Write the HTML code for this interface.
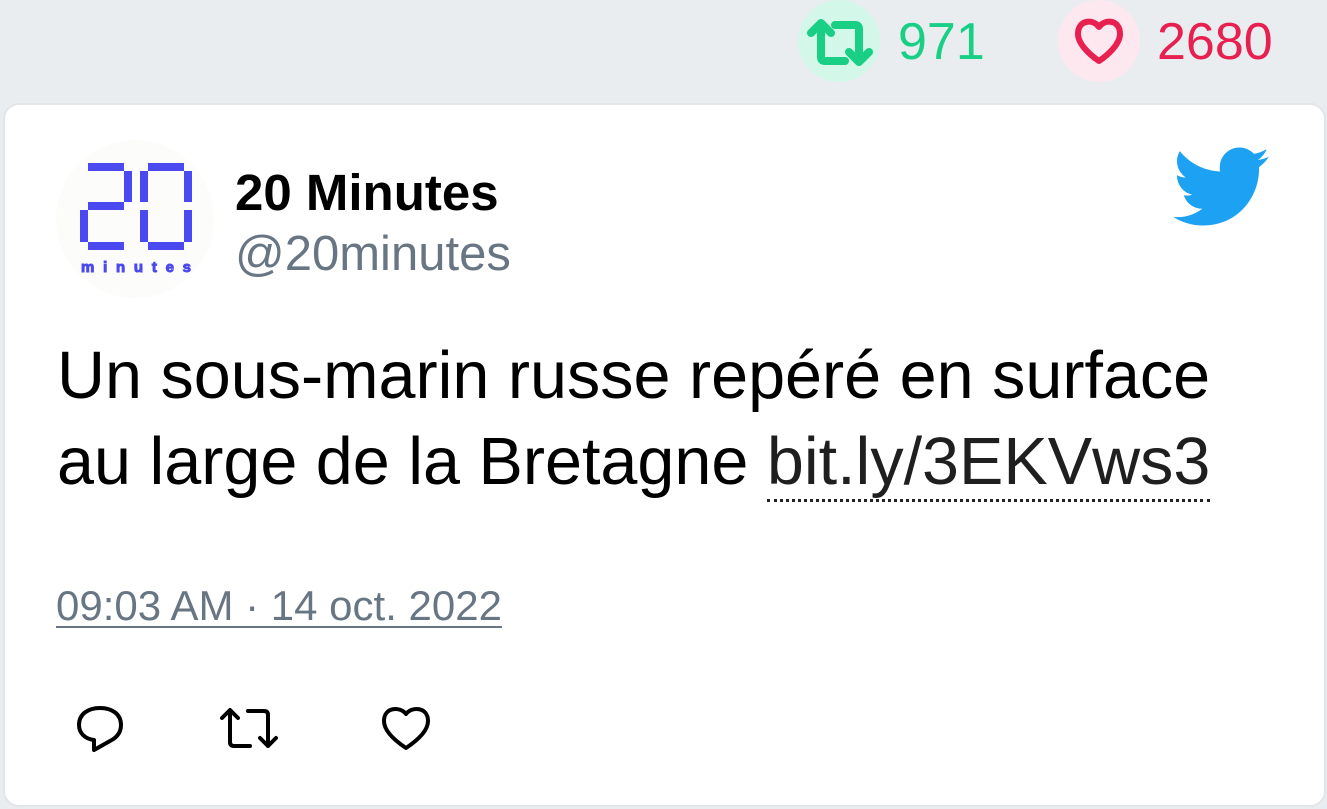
<!DOCTYPE html>
<html><head><meta charset="utf-8"><style>
html,body{margin:0;padding:0;width:1327px;height:809px;overflow:hidden;background:#e9edf0;font-family:"Liberation Sans",sans-serif;}
.card{position:absolute;left:3px;top:103px;width:1319px;height:700px;background:#fff;border:2px solid #e3e5e8;border-radius:16px;}
.abs{position:absolute;white-space:nowrap;}
</style></head><body>
<div class="abs" style="left:798px;top:0;width:82px;height:82px;border-radius:50%;background:#d3f7e8"></div>
<svg class="abs" style="left:807px;top:19px" width="66" height="48" viewBox="0 0 66 48" fill="none" stroke="#19cf86" stroke-width="8" stroke-linecap="round" stroke-linejoin="round">
<path d="M4 14 L14 4 L24 14 M14 6 V38 Q14 42 18 42 H38"/><path d="M28 6 H48 Q52 6 52 10 V42 M42 33 L52 43 L62 33"/></svg>
<div class="abs" style="left:898px;top:12px;font-size:52px;color:#19cf86">971</div>
<div class="abs" style="left:1058px;top:0;width:82px;height:82px;border-radius:50%;background:#fde8ef"></div>
<svg class="abs" style="left:1074px;top:17px" width="50" height="48" viewBox="0 0 50 48" fill="none" stroke="#e8204f" stroke-width="6" stroke-linejoin="round">
<path d="M25 10 C20 2 4 2 4 17 C4 27 16 38 25 44 C34 38 46 27 46 17 C46 2 30 2 25 10 Z"/></svg>
<div class="abs" style="left:1157px;top:12px;font-size:52px;color:#e8204f">2680</div>
<div class="card"></div>
<div class="abs" style="left:56px;top:140px;width:158px;height:158px;border-radius:50%;background:#fcfcfa"></div>
<svg class="abs" style="left:78px;top:162px" width="116" height="118" viewBox="0 0 116 118" fill="#4a4af0">
<rect x="10" y="1" width="36" height="8"/><rect x="46" y="9" width="8" height="31"/><rect x="10" y="40" width="36" height="8"/><rect x="2" y="48" width="8" height="32"/><rect x="10" y="80" width="36" height="8"/>
<rect x="70" y="1" width="36" height="8"/><rect x="106" y="9" width="8" height="31"/><rect x="106" y="48" width="8" height="32"/><rect x="70" y="80" width="36" height="8"/><rect x="62" y="48" width="8" height="32"/><rect x="62" y="9" width="8" height="31"/>
<text x="58" y="110" font-family="Liberation Sans,sans-serif" font-size="15" font-weight="bold" stroke="#4a4af0" stroke-width="1" text-anchor="middle" textLength="110">minutes</text>
</svg>
<div class="abs" style="left:235px;top:163px;font-size:51px;font-weight:bold;color:#000">20 Minutes</div>
<div class="abs" style="left:235px;top:226px;font-size:49px;color:#687684">@20minutes</div>
<svg class="abs" style="left:1173px;top:147px" width="96" height="79" viewBox="0 0 24 19.5"><path fill="#1da1f2" d="M24 2.3c-.9.4-1.8.7-2.8.8 1-.6 1.8-1.6 2.2-2.7-1 .6-2 1-3.1 1.2C19.3.6 18 0 16.6 0c-2.7 0-4.9 2.2-4.9 4.9 0 .4 0 .8.1 1.1C7.7 5.8 4.1 3.9 1.7.9c-.4.7-.7 1.6-.7 2.5 0 1.7.9 3.2 2.2 4.1-.8 0-1.6-.2-2.2-.6v.1c0 2.4 1.7 4.4 3.9 4.8-.4.1-.8.2-1.3.2-.3 0-.6 0-.9-.1.6 2 2.4 3.4 4.6 3.4-1.7 1.3-3.8 2.1-6.1 2.1-.4 0-.8 0-1.2-.1 2.2 1.4 4.8 2.2 7.5 2.2 9.1 0 14-7.5 14-14v-.6c1-.7 1.8-1.6 2.5-2.6z"/></svg>
<div class="abs" style="left:57px;top:333px;font-size:66.5px;line-height:86px;color:#000">Un sous-marin russe repéré en surface<br>au large de la Bretagne <span style="color:#1f1f1f;border-bottom:3px dotted #222;line-height:1">bit.ly/3EKVws3</span></div>
<div class="abs" style="left:56px;top:582px;font-size:42px;color:#687684;text-decoration:underline;text-decoration-thickness:2px;text-underline-offset:6px">09:03 AM · 14 oct. 2022</div>
<svg class="abs" style="left:74px;top:704px" width="52" height="50" viewBox="0 0 52 50" fill="none" stroke="#000" stroke-width="4" stroke-linejoin="round">
<path d="M26 4 C14 4 5 10 5 21 C5 29 11 35 20 36 L20 46 L36 37 C44 33 47 27 47 21 C47 10 38 4 26 4 Z"/></svg>
<svg class="abs" style="left:218px;top:706px" width="66" height="46" viewBox="0 0 66 46" fill="none" stroke="#000" stroke-width="4" stroke-linecap="round" stroke-linejoin="round">
<path d="M4 12 L12 4 L20 12 M12 5 V36 Q12 40 16 40 H32"/><path d="M30 5 H46 Q50 5 50 9 V40 M42 32 L50 40 L58 32"/></svg>
<svg class="abs" style="left:380px;top:704px" width="52" height="48" viewBox="0 0 52 48" fill="none" stroke="#000" stroke-width="4" stroke-linejoin="round">
<path d="M26 10 C20 2 4 3 4 17 C4 28 17 38 26 44 C35 38 48 28 48 17 C48 3 32 2 26 10 Z"/></svg>
</body></html>
